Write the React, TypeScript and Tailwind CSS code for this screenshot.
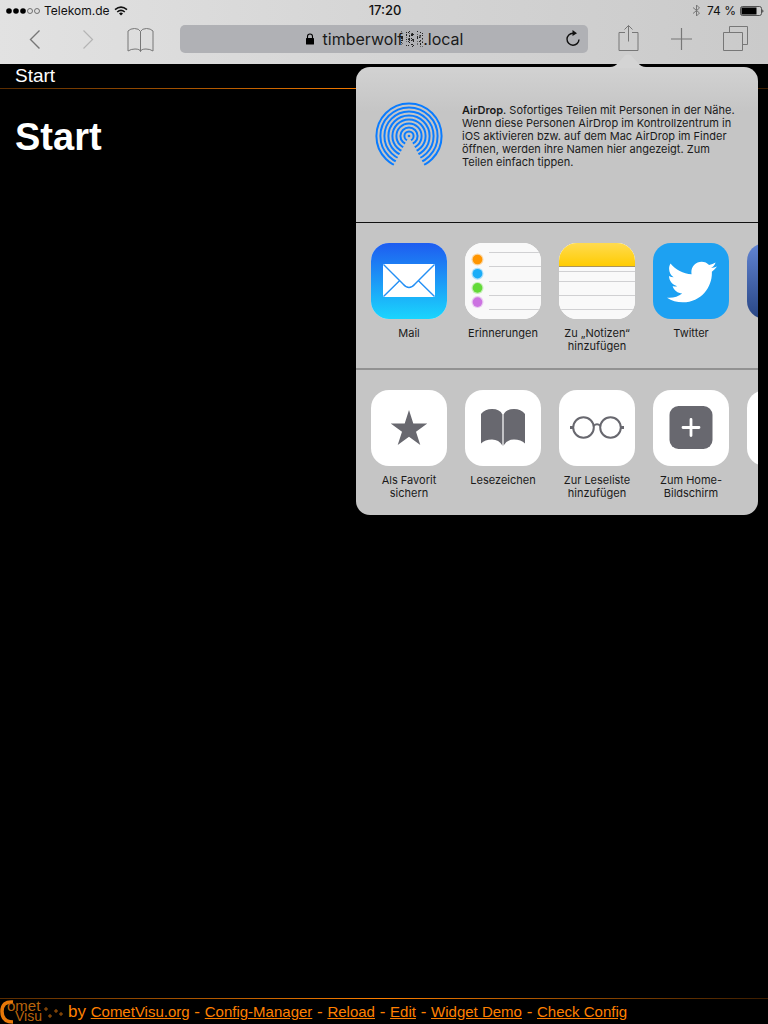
import type { ReactNode } from "react";
import { FaTwitter } from "react-icons/fa";

const speckles: [number, number][] = Array.from({ length: 105 }, (_, i) => [
  (i * 7 + ((i * i) % 11)) % 22,
  (i * 5 + ((i * i * 3) % 13)) % 16,
]);

function StatusBar() {
  return (
    <div className="grid h-5 grid-cols-3 items-center pt-px pr-1 pl-1.5 text-xs text-[#111]">
      <div className="flex items-center gap-1">
        <svg width="34" height="8" viewBox="0 0 34 8" aria-hidden="true">
          <circle cx="3" cy="4" r="2.8" />
          <circle cx="10" cy="4" r="2.8" />
          <circle cx="17" cy="4" r="2.8" />
          <g fill="none" stroke="#444" strokeWidth="0.7">
            <circle cx="24" cy="4" r="2.5" />
            <circle cx="31" cy="4" r="2.5" />
          </g>
        </svg>
        <span>Telekom.de</span>
        <svg width="14" height="10" viewBox="0 0 14 10" fill="none" stroke="#111" strokeWidth="1.6" aria-hidden="true">
          <path d="M1 3.6 Q7 -1.4 13 3.6" />
          <path d="M3.2 6 Q7 2.8 10.8 6" />
          <path d="M5 7.4 Q7 5.8 9 7.4 L7 9.6 Z" fill="#111" stroke="none" />
        </svg>
      </div>
      <time className="text-center text-[13px] font-medium">17:20</time>
      <div className="flex items-center justify-end gap-1">
        <svg width="9" height="13" viewBox="0 0 9 13" fill="none" stroke="#777" strokeWidth="1" aria-hidden="true">
          <path d="M1 3.5 L7.5 9 L4.5 12 V1 L7.5 4 L1 9.5" />
        </svg>
        <span className="pl-0.5">74 %</span>
        <svg width="24" height="10" viewBox="0 0 24 10" aria-hidden="true">
          <rect x="0.5" y="0.5" width="21" height="9" rx="2" fill="none" stroke="#333" strokeWidth="0.8" />
          <rect x="1.5" y="1.5" width="15" height="7" fill="#000" />
          <path d="M22.5 3.2 Q24.2 5 22.5 6.8 Z" />
        </svg>
      </div>
    </div>
  );
}

function ToolButton({ label, children }: { label: string; children: ReactNode }) {
  return (
    <button type="button" aria-label={label} className="flex h-[30px] w-[53px] items-center justify-center">
      <svg width="28" height="30" viewBox="0 0 28 30" fill="none" stroke="#777" strokeWidth="1">
        {children}
      </svg>
    </button>
  );
}

function Toolbar() {
  return (
    <div className="flex h-11 items-start gap-[13px] px-2 pt-0.5">
      <div className="flex">
        <ToolButton label="Zurück">
          <path d="M18.5 8.5 L9.5 17.5 L18.5 26.5" strokeWidth="1.4" />
        </ToolButton>
        <ToolButton label="Vorwärts">
          <path d="M9.5 8.5 L18.5 17.5 L9.5 26.5" stroke="#b4b4b4" strokeWidth="1.2" />
        </ToolButton>
        <ToolButton label="Lesezeichen">
          <path d="M13.5 29.500 Q13 27 8 27 Q4 27 1 29 V9 Q3.500 6.500 7.500 6.500 Q12 6.500 13.500 9.500 Q15 6.500 19.500 6.500 Q23.500 6.500 26 9 V29 Q23 27 19 27 Q14 27 13.500 29.500 Z M13.500 9.500 V29.500" />
        </ToolButton>
      </div>
      <div className="mt-[3px] flex h-7 flex-1 items-center rounded-[5px] bg-[#b0b1b5] px-[7px]">
        <span className="w-4" />
        <button type="button" className="flex flex-1 items-center justify-center gap-2 text-base text-[#1a1a1a]">
          <svg width="10" height="12" viewBox="0 0 10 12" aria-hidden="true">
            <rect x="1" y="5" width="8" height="6.5" rx="0.6" fill="#000" />
            <path d="M2.5 5.5 V3.5 Q2.5 1 5 1 Q7.5 1 7.5 3.5 V5.5" fill="none" stroke="#000" strokeWidth="1.1" />
          </svg>
          <span className="flex items-center">
            timberwolf
            <svg width="22" height="16" viewBox="0 0 22 16" className="-ml-0.5" aria-hidden="true">
              {speckles.map(([x, y], i) => (
                <rect key={i} x={x} y={y} width="1" height="1" fill={i % 3 ? "#222" : "#666"} />
              ))}
            </svg>
            .local
          </span>
        </button>
        <button type="button" aria-label="Neu laden">
          <svg width="16" height="18" viewBox="0 0 16 18" fill="none" stroke="#111" strokeWidth="1.4">
            <path d="M9.5 3.2 H8 A6 6 0 1 0 14 9.5" />
            <path d="M7.5 0 L12 3.2 L7.5 6 Z" fill="#111" stroke="none" />
          </svg>
        </button>
      </div>
      <div className="flex">
        <ToolButton label="Teilen">
          <path d="M11 10.5 H5 V28.5 H24 V10.5 H18 M14.5 19.5 V3.5 M10.5 7.5 L14.5 3.5 L18.5 7.5" />
        </ToolButton>
        <ToolButton label="Neuer Tab">
          <path d="M14.5 6 V28 M4 17 H25" strokeWidth="1.2" />
        </ToolButton>
        <ToolButton label="Tabs">
          <path d="M3.5 10.5 H22.5 V28.5 H3.5 Z M9.5 10 V4.5 H27.5 V22.5 H23" />
        </ToolButton>
      </div>
    </div>
  );
}

function AirDropIcon() {
  return (
    <svg width="68" height="68" viewBox="-34 -34 68 68" className="-mt-px shrink-0" aria-hidden="true">
      <clipPath id="airdrop-wedge">
        <path d="M-34 -34 H34 V29.5 H15.5 L0.6 1.5 H-0.6 L-15.5 29.5 H-34 Z" />
      </clipPath>
      <circle r="1.3" fill="#0a7cff" />
      <g clipPath="url(#airdrop-wedge)" fill="none" stroke="#0a7cff" strokeWidth="2">
        {[4.6, 8.6, 12.6, 16.6, 20.6, 24.6, 28.6, 32.6].map((r) => (
          <circle key={r} r={r} />
        ))}
      </g>
    </svg>
  );
}

const mailIcon = (
  <svg viewBox="0 0 76 76">
    <defs>
      <linearGradient id="mail-sky" x1="0" y1="0" x2="0" y2="1">
        <stop offset="0" stopColor="#1e5cf0" />
        <stop offset="1" stopColor="#1ad5fd" />
      </linearGradient>
    </defs>
    <rect width="76" height="76" fill="url(#mail-sky)" />
    <rect x="12" y="21" width="52" height="33" rx="1" fill="#fff" />
    <g fill="none" stroke="#2590f5" strokeWidth="1.4">
      <path d="M12.5 21.5 L32 41 Q38 48 44 41 L63.5 21.5" />
      <path d="M12.5 53.5 L28.5 37.8 M63.5 53.5 L47.5 37.8" />
    </g>
  </svg>
);

const remindersIcon = (
  <svg viewBox="0 0 76 76">
    <rect width="76" height="76" fill="#f9f9f9" />
    <path d="M24 9.5 H76 M24 23.5 H76 M24 38.5 H76 M24 52.5 H76 M24 66.5 H76" stroke="#d0d0d2" />
    {["#ff9500", "#1badf8", "#63da38", "#cc73e1"].map((color, i) => (
      <g key={color} fill={color}>
        <circle cx="12.5" cy={16.5 + i * 14.2} r="6" opacity="0.35" />
        <circle cx="12.5" cy={16.5 + i * 14.2} r="4.8" />
      </g>
    ))}
  </svg>
);

const notesIcon = (
  <svg viewBox="0 0 76 76">
    <defs>
      <linearGradient id="notes-top" x1="0" y1="0" x2="0" y2="1">
        <stop offset="0" stopColor="#ffdb50" />
        <stop offset="1" stopColor="#ffcc02" />
      </linearGradient>
    </defs>
    <rect width="76" height="76" fill="#f9f9f9" />
    <rect width="76" height="23" fill="url(#notes-top)" />
    <path d="M0 23.5 H76" stroke="#aa945c" />
    <path d="M0 28.5 H76 M0 38.5 H76 M0 52.5 H76 M0 66.5 H76" stroke="#d0d0d2" />
  </svg>
);

const twitterIcon = (
  <span className="flex size-full items-center justify-center bg-[#1da1f2] pt-px pl-px text-white">
    <FaTwitter size={50} />
  </span>
);

const facebookIcon = <span className="block size-full bg-linear-to-b from-[#6285d4] to-[#294684]" />;

const starIcon = (
  <svg viewBox="0 0 76 76" fill="#68686f">
    <path d="M38 20 L42.3 33.5 H56.3 L45 41.8 L49.3 55 L38 46.800 L26.7 55 L31 41.8 L19.7 33.5 H33.7 Z" />
  </svg>
);

const bookIcon = (
  <svg viewBox="0 0 76 76" fill="#68686f">
    <path d="M16 24 Q20 19 27 19 Q35 19 37.4 24.5 V55.5 Q34 49.5 27 49.5 Q20 49.5 16 53.5 Z" />
    <path d="M60 24 Q56 19 49 19 Q41 19 38.6 24.5 V55.5 Q42 49.5 49 49.5 Q56 49.5 60 53.5 Z" />
    <path d="M37.4 24.5 H38.6 V55.5 H37.4 Z" fill="#c4c4c6" />
  </svg>
);

const glassesIcon = (
  <svg viewBox="0 0 76 76" fill="none" stroke="#68686f" strokeWidth="2">
    <circle cx="24.5" cy="37.5" r="10.3" />
    <circle cx="51.5" cy="37.5" r="10.3" />
    <path d="M34.5 36 Q38 32.5 41.5 36" />
    <path d="M11 37.5 H14 M62 37.5 H65" strokeWidth="3" />
  </svg>
);

const homeIcon = (
  <svg viewBox="0 0 76 76">
    <rect x="16.5" y="16" width="43" height="43" rx="9" fill="#68686f" />
    <path d="M38 29.500 V45.500 M30 37.5 H46" stroke="#fff" strokeWidth="2.8" strokeLinecap="round" />
  </svg>
);

type Item = { label: string; icon: ReactNode };

const apps: Item[] = [
  { label: "Mail", icon: mailIcon },
  { label: "Erinnerungen", icon: remindersIcon },
  { label: "Zu „Notizen“ hinzufügen", icon: notesIcon },
  { label: "Twitter", icon: twitterIcon },
  { label: "", icon: facebookIcon },
];

const actions: Item[] = [
  { label: "Als Favorit sichern", icon: starIcon },
  { label: "Lesezeichen", icon: bookIcon },
  { label: "Zur Leseliste hinzufügen", icon: glassesIcon },
  { label: "Zum Home-Bildschirm", icon: homeIcon },
  { label: "", icon: null },
];

function ShareRow({ items }: { items: Item[] }) {
  return (
    <div className="flex gap-[18px] overflow-hidden px-[15px] pt-5 pb-[15px]">
      {items.map((item, i) => (
        <button
          key={i}
          type="button"
          className="flex w-[76px] shrink-0 flex-col items-center gap-2 text-[11px] leading-[13px]"
        >
          <span className="block size-[76px] overflow-hidden rounded-[18px] bg-white">{item.icon}</span>
          <span className="min-h-[26px]">{item.label}</span>
        </button>
      ))}
    </div>
  );
}

function SharePopover() {
  return (
    <section
      aria-label="Teilen"
      className="absolute top-[67px] right-2.5 w-[402px] rounded-[14px] bg-linear-to-b from-[#d2d2d2] to-[#c5c5c5] to-10% font-[Inter,sans-serif] text-[#1a1a1a]"
    >
      <svg width="36" height="14" viewBox="0 0 36 14" className="absolute -top-[13px] right-[112px]" aria-hidden="true">
        <path d="M0 14 V13 Q5 13 8 9 L14.5 1.8 Q18 -1 21.5 1.8 L28 9 Q31 13 36 13 V14 Z" fill="#d4d4d4" />
      </svg>
      <div className="flex items-start gap-[19px] border-b border-[#111] px-[19px] pt-9 pb-[52px]">
        <AirDropIcon />
        <p className="pt-px text-[11px] leading-[13px]">
          <b className="font-semibold">AirDrop</b>. Sofortiges Teilen mit Personen in der Nähe. Wenn diese Personen
          AirDrop im Kontrollzentrum in iOS aktivieren bzw. auf dem Mac AirDrop im Finder öffnen, werden ihre Namen
          hier angezeigt. Zum Teilen einfach tippen.
        </p>
      </div>
      <div className="border-b-2 border-[#929292]">
        <ShareRow items={apps} />
      </div>
      <ShareRow items={actions} />
    </section>
  );
}

function CometLogo() {
  return (
    <svg width="64" height="25" viewBox="0 0 64 25" aria-label="CometVisu" className="shrink-0">
      <path d="M13 3 Q2 2 2 12.5 Q2 23 13 23" fill="none" stroke="#e87808" strokeWidth="3.5" />
      <g fill="#b8640c" fontFamily="Liberation Sans, Arial, sans-serif">
        <text x="7" y="12" fontSize="15">omet</text>
        <text x="15" y="22" fontSize="14">Visu</text>
      </g>
      <path d="M44 10 H48 M46 8 V12 M48 17 H52 M50 15 V19 M54 12 H58 M56 10 V14 M59 15 H63 M61 13 V17" stroke="#a85808" />
    </svg>
  );
}

const links = ["CometVisu.org", "Config-Manager", "Reload", "Edit", "Widget Demo", "Check Config"];

export default function App() {
  return (
    <div className="relative flex min-h-screen flex-col bg-black font-['Liberation_Sans',Arial,sans-serif] text-white">
      <header className="h-16 bg-linear-to-r from-[#e2e2e2] via-[#d5d5d5] to-[#cacaca] font-[Inter,sans-serif]">
        <StatusBar />
        <Toolbar />
      </header>
      <nav className="px-[15px] text-[19px] leading-6">Start</nav>
      <div className="h-px bg-linear-to-r from-[#5a2c00] via-[#ff8000] to-[#3a1c00]" />
      <main className="flex-1 px-[15px] pt-[26px]">
        <h1 className="text-[38px] leading-[44px] font-bold">Start</h1>
      </main>
      <footer>
        <div className="h-px bg-linear-to-r from-[#5a2c00] via-[#ff8000] to-[#3a1c00]" />
        <div className="flex h-[25px] items-center gap-1 text-[17px] leading-6 text-[#ff8000]">
          <CometLogo />
          <p>
            by{" "}
            {links.map((link, i) => (
              <span key={link}>
                {i > 0 && " - "}
                <a href="#" className="text-[15px] underline">
                  {link}
                </a>
              </span>
            ))}
          </p>
        </div>
      </footer>
      <SharePopover />
    </div>
  );
}
